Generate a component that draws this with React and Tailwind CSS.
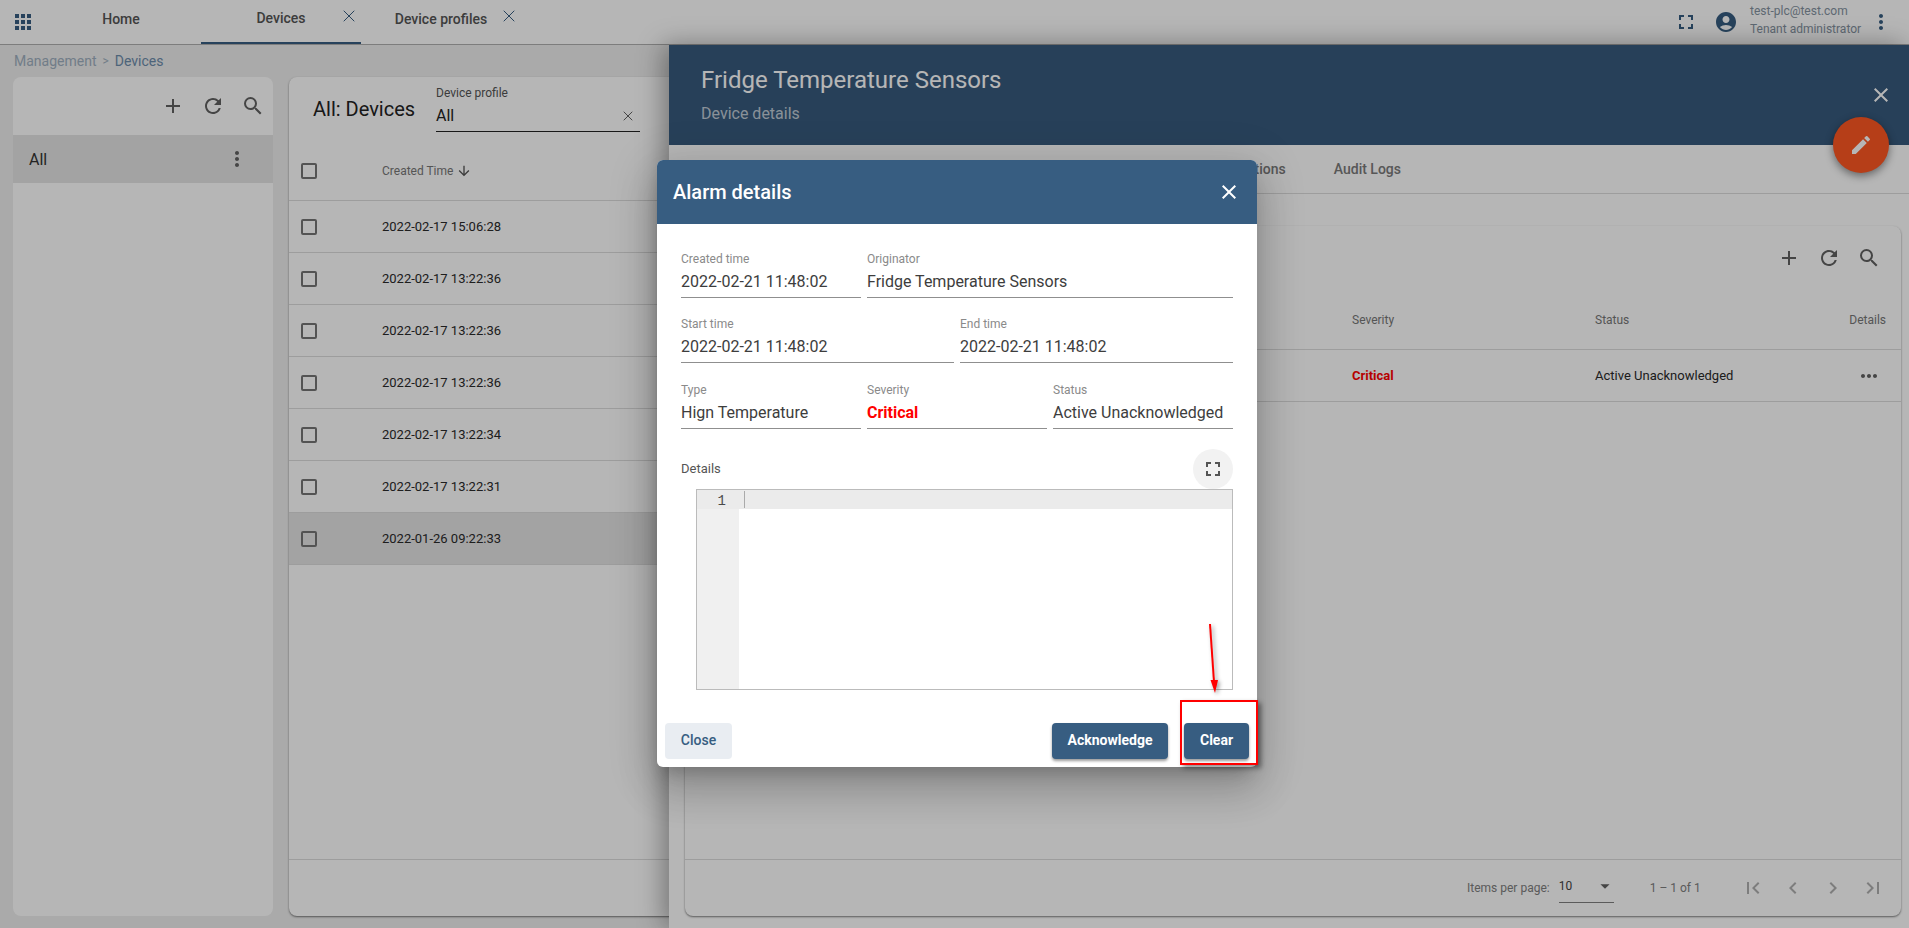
import React from "react";
import {
  MdApps, MdFullscreen, MdAccountCircle, MdMoreVert, MdClose, MdEdit, MdAdd, MdRefresh, MdSearch,
  MdMoreHoriz, MdArrowDownward, MdFirstPage, MdChevronLeft, MdChevronRight, MdLastPage, MdArrowDropDown,
} from "react-icons/md";
import { X } from "lucide-react";

const rows = [
  "2022-02-17 15:06:28", "2022-02-17 13:22:36", "2022-02-17 13:22:36", "2022-02-17 13:22:36",
  "2022-02-17 13:22:34", "2022-02-17 13:22:31", "2022-01-26 09:22:33",
];

function Check() {
  return <div className="w-4 h-4 border-2 border-[#757575] rounded-[2px] shrink-0" />;
}

function ToolIcons({ className }) {
  return (
    <div className={`flex items-center gap-[16px] text-[#616161] ${className}`}>
      <MdAdd size={24} />
      <MdRefresh size={24} />
      <MdSearch size={24} />
    </div>
  );
}

function Field({ label, value, className = "flex-1", valueClass = "text-[#3d3d3d]" }) {
  return (
    <div className={`${className} h-[47px] border-b border-[#8f8f8f] min-w-0`}>
      <div className="h-4 text-[12px] leading-4 text-[#8a8a8a]">{label}</div>
      <div className={`mt-[3px] h-6 text-[16px] leading-6 whitespace-nowrap ${valueClass}`}>{value}</div>
    </div>
  );
}

function Tab({ label, active, closable, className }) {
  return (
    <div className={`relative h-full flex items-center justify-center pb-[5px] text-[14px] font-medium text-[#555555] ${className} ${active ? "border-b-2 border-[#375d81]" : ""}`}>
      <span>{label}</span>
      {closable && <X size={20} strokeWidth={1.2} className="absolute text-[#375d81] top-[6px]" />}
    </div>
  );
}

export default function App() {
  return (
    <div className="relative w-[1909px] h-[928px] overflow-hidden bg-[#eeeeee] font-['Roboto',sans-serif]">
      <header className="h-[45px] bg-white border-b border-[#b0b0b0] flex items-center">
        <MdApps size={24} className="ml-[11px] text-[#375d81] shrink-0 -mt-[1px]" />
        <div className="flex h-full ml-[6px]">
          <Tab label="Home" className="w-[160px]" />
          <Tab label="Devices" active closable className="w-[160px] [&>svg]:right-[2px]" />
          <Tab label="Device profiles" closable className="w-[160px] [&>svg]:right-[2px]" />
        </div>
        <div className="ml-auto flex items-center">
          <MdFullscreen size={24} className="text-[#375d81] -mt-[1px]" />
          <MdAccountCircle size={24} className="ml-[16px] text-[#375d81] -mt-[1px]" />
          <div className="ml-[12px] w-[119px] text-[12px] leading-[18px] text-[#8492a0] -mt-[4px]">
            <div>test-plc@test.com</div>
            <div>Tenant administrator</div>
          </div>
          <MdMoreVert size={24} className="mr-[16px] text-[#375d81] -mt-[1px]" />
        </div>
      </header>

      <div className="h-[32px] pl-[14px] flex items-center text-[14px] text-[#9fb0c0]">
        <span>Management</span>
        <span className="mx-[6px] text-[12px]">&gt;</span>
        <span className="text-[#6d8cab]">Devices</span>
      </div>

      <main className="flex gap-[16px] pl-[13px] h-[839px]">
        <section className="w-[260px] bg-white rounded-lg flex flex-col">
          <ToolIcons className="h-[58px] justify-end pr-[8px]" />
          <div className="h-[48px] bg-[#e5e5e5] flex items-center justify-between pl-[16px] pr-[24px] pt-[1px] text-[16px] text-[#333333]">
            <span>All</span>
            <MdMoreVert size={24} className="text-[#616161] -mt-[1px]" />
          </div>
        </section>

        <section className="flex-1 bg-white rounded-lg shadow-[0_1px_2px_rgba(0,0,0,0.5)] flex flex-col">
          <div className="h-[68px] flex items-start pl-[24px] shrink-0">
            <div className="mt-[20px] text-[20px] leading-6 text-[#222222] w-[123px]">All: Devices</div>
            <div className="w-[204px] mt-[9px]">
              <div className="text-[12px] leading-[14px] text-[#555555]">Device profile</div>
              <div className="mt-[2px] h-[30px] flex items-center justify-between border-b border-[#222222] pb-[1px] text-[16px] text-[#222222]">
                <span>All</span>
                <X size={16} strokeWidth={1.4} className="mr-[4px] text-[#555555]" />
              </div>
            </div>
          </div>
          <div className="h-[56px] shrink-0 border-b border-[#dddddd] flex items-center pl-[12px] pb-[3px] text-[12px] text-[#777777]">
            <Check />
            <span className="ml-[65px]">Created Time</span>
            <MdArrowDownward size={16} className="ml-[3px] text-[#555555]" />
          </div>
          {rows.map((t, i) => (
            <div key={i} className={`h-[52px] shrink-0 border-b border-[#dddddd] flex items-center pl-[12px] text-[13px] text-[#2a2a2a] ${i === 6 ? "bg-[#e5e5e5]" : ""}`}>
              <Check />
              <span className="ml-[65px]">{t}</span>
            </div>
          ))}
          <div className="mt-auto h-[57px] border-t border-[#dddddd]" />
        </section>
      </main>

      {/* Device details drawer */}
      <aside className="absolute left-[669px] top-[45px] right-0 bottom-0 bg-white flex flex-col shadow-[-6px_0_24px_rgba(0,0,0,0.35)]">
        <div className="relative h-[100px] shrink-0 bg-[#375a7d] pl-[32px] text-white">
          <div className="pt-[20px] text-[24px] leading-[30px]">Fridge Temperature Sensors</div>
          <div className="mt-[9px] text-[16px] leading-5 text-white/70">Device details</div>
          <MdClose size={24} className="absolute right-[16px] top-[38px]" />
          <div className="absolute right-[20px] top-[72px] w-14 h-14 rounded-full bg-[#ff5722] flex items-center justify-center shadow-[0_3px_8px_rgba(0,0,0,0.45)]">
            <MdEdit size={24} />
          </div>
        </div>
        <div className="h-[49px] shrink-0 border-b border-[#dddddd] flex justify-end items-center pr-[484px] text-[14px] font-medium text-[#7a7a7a]">
          <span className="px-[24px]">Events</span>
          <span className="px-[24px]">Relations</span>
          <span className="px-[24px]">Audit Logs</span>
        </div>
        <div className="flex-1 min-h-0 ml-[16px] mr-[8px] mt-[32px] mb-[12px] rounded-lg bg-white shadow-[0_1px_2px_rgba(0,0,0,0.5)] flex flex-col">
          <ToolIcons className="h-[64px] justify-end pr-[20px] shrink-0" />
          <div className="h-[60px] shrink-0 border-b border-[#dddddd] flex items-center pl-[667px] text-[12px] text-[#777777]">
            <span className="w-[243px]">Severity</span>
            <span className="flex-1">Status</span>
            <span className="pr-[15px]">Details</span>
          </div>
          <div className="h-[52px] shrink-0 border-b border-[#dddddd] flex items-center pl-[667px] text-[13px] text-[#2a2a2a]">
            <span className="w-[243px] font-bold text-[#ff0000]">Critical</span>
            <span className="flex-1">Active Unacknowledged</span>
            <MdMoreHoriz size={24} className="mr-[20px] text-[#616161]" />
          </div>
          <div className="mt-auto h-[57px] border-t border-[#dddddd] flex items-center pl-[782px] text-[12px] text-[#808080]">
            <span>Items per page:</span>
            <div className="ml-[9px] w-[55px] h-[26px] mt-[4px] border-b border-[#808080] flex items-start justify-between text-[#444444]">
              <span>10</span>
              <MdArrowDropDown size={22} className="text-[#616161] -mt-[2px] -mr-[2px]" />
            </div>
            <span className="ml-[36px]">1 – 1 of 1</span>
            <div className="ml-[40px] flex gap-[16px] text-[#b0b0b0]">
              <MdFirstPage size={24} />
              <MdChevronLeft size={24} />
              <MdChevronRight size={24} />
              <MdLastPage size={24} />
            </div>
          </div>
        </div>
      </aside>

      {/* Backdrop */}
      <div className="absolute inset-0 bg-[rgba(0,0,0,0.288)]" />

      {/* Alarm dialog */}
      <div className="absolute left-[657px] top-[160px] w-[600px] h-[607px] bg-white rounded-[6px] overflow-hidden shadow-[0_11px_15px_-7px_rgba(0,0,0,0.2),0_24px_38px_3px_rgba(0,0,0,0.14),0_9px_46px_8px_rgba(0,0,0,0.12)] flex flex-col">
        <div className="h-[64px] shrink-0 bg-[#375d81] flex items-center justify-between pl-[16px] pr-[16px] text-white">
          <span className="text-[20px] font-medium">Alarm details</span>
          <MdClose size={24} />
        </div>
        <div className="px-[24px] pt-[27px]">
          <div className="flex gap-[6px]">
            <Field label="Created time" value="2022-02-21 11:48:02" className="w-[180px]" />
            <Field label="Originator" value="Fridge Temperature Sensors" />
          </div>
          <div className="flex gap-[6px] mt-[18px]">
            <Field label="Start time" value="2022-02-21 11:48:02" />
            <Field label="End time" value="2022-02-21 11:48:02" />
          </div>
          <div className="flex gap-[6px] mt-[19px]">
            <Field label="Type" value="Hign Temperature" />
            <Field label="Severity" value="Critical" valueClass="font-bold text-[#ff0000]" />
            <Field label="Status" value="Active Unacknowledged" />
          </div>
          <div className="mt-[20px] h-[40px] flex items-center justify-between">
            <span className="text-[13px] text-[#555555]">Details</span>
            <div className="w-10 h-10 rounded-full bg-[#f2f2f2] flex items-center justify-center text-[#555555]">
              <MdFullscreen size={24} />
            </div>
          </div>
          <div className="ml-[15px] h-[201px] border border-[#bbbbbb] relative flex">
            <div className="w-[42px] bg-[#f0f0f0] shrink-0" />
            <div className="absolute left-0 right-0 top-0 h-[19px] bg-[#ebebeb] flex items-center pt-[3px] font-['Liberation_Mono',monospace] text-[14px] text-[#4a4a4a]">
              <span className="w-[29px] text-right">1</span>
              <span className="ml-[18px] -mt-[3px] w-[1px] h-[17px] bg-[#aaaaaa]" />
            </div>
          </div>
        </div>
        <div className="mt-auto pb-[8px] px-[8px] flex items-center text-[14px] font-medium">
          <button className="w-[67px] h-[36px] rounded-[4px] bg-[#e9edf2] text-[#375d81] pb-[1px]">Close</button>
          <button className="ml-auto w-[116px] h-[36px] rounded-[4px] bg-[#375d81] text-white font-bold pb-[1px] shadow-[0_2px_3px_rgba(0,0,0,0.4)]">Acknowledge</button>
          <button className="ml-[16px] w-[65px] h-[36px] rounded-[4px] bg-[#375d81] text-white font-bold pb-[1px] shadow-[0_2px_3px_rgba(0,0,0,0.4)]">Clear</button>
        </div>
      </div>

      {/* Red annotation */}
      <svg className="absolute left-[1200px] top-[620px] w-[26px] h-[80px] drop-shadow-[2px_2px_2px_rgba(0,0,0,0.4)]" viewBox="0 0 26 80">
        <path d="M10 4 L14 62" stroke="#ff0000" strokeWidth="2" fill="none" />
        <path d="M10.5 60 L18 60 L15 73 Z" fill="#ff0000" />
      </svg>
      <div className="absolute left-[1180px] top-[700px] w-[78px] h-[65px] border-2 border-[#ff0000] shadow-[3px_3px_5px_rgba(0,0,0,0.45)]" />
    </div>
  );
}
